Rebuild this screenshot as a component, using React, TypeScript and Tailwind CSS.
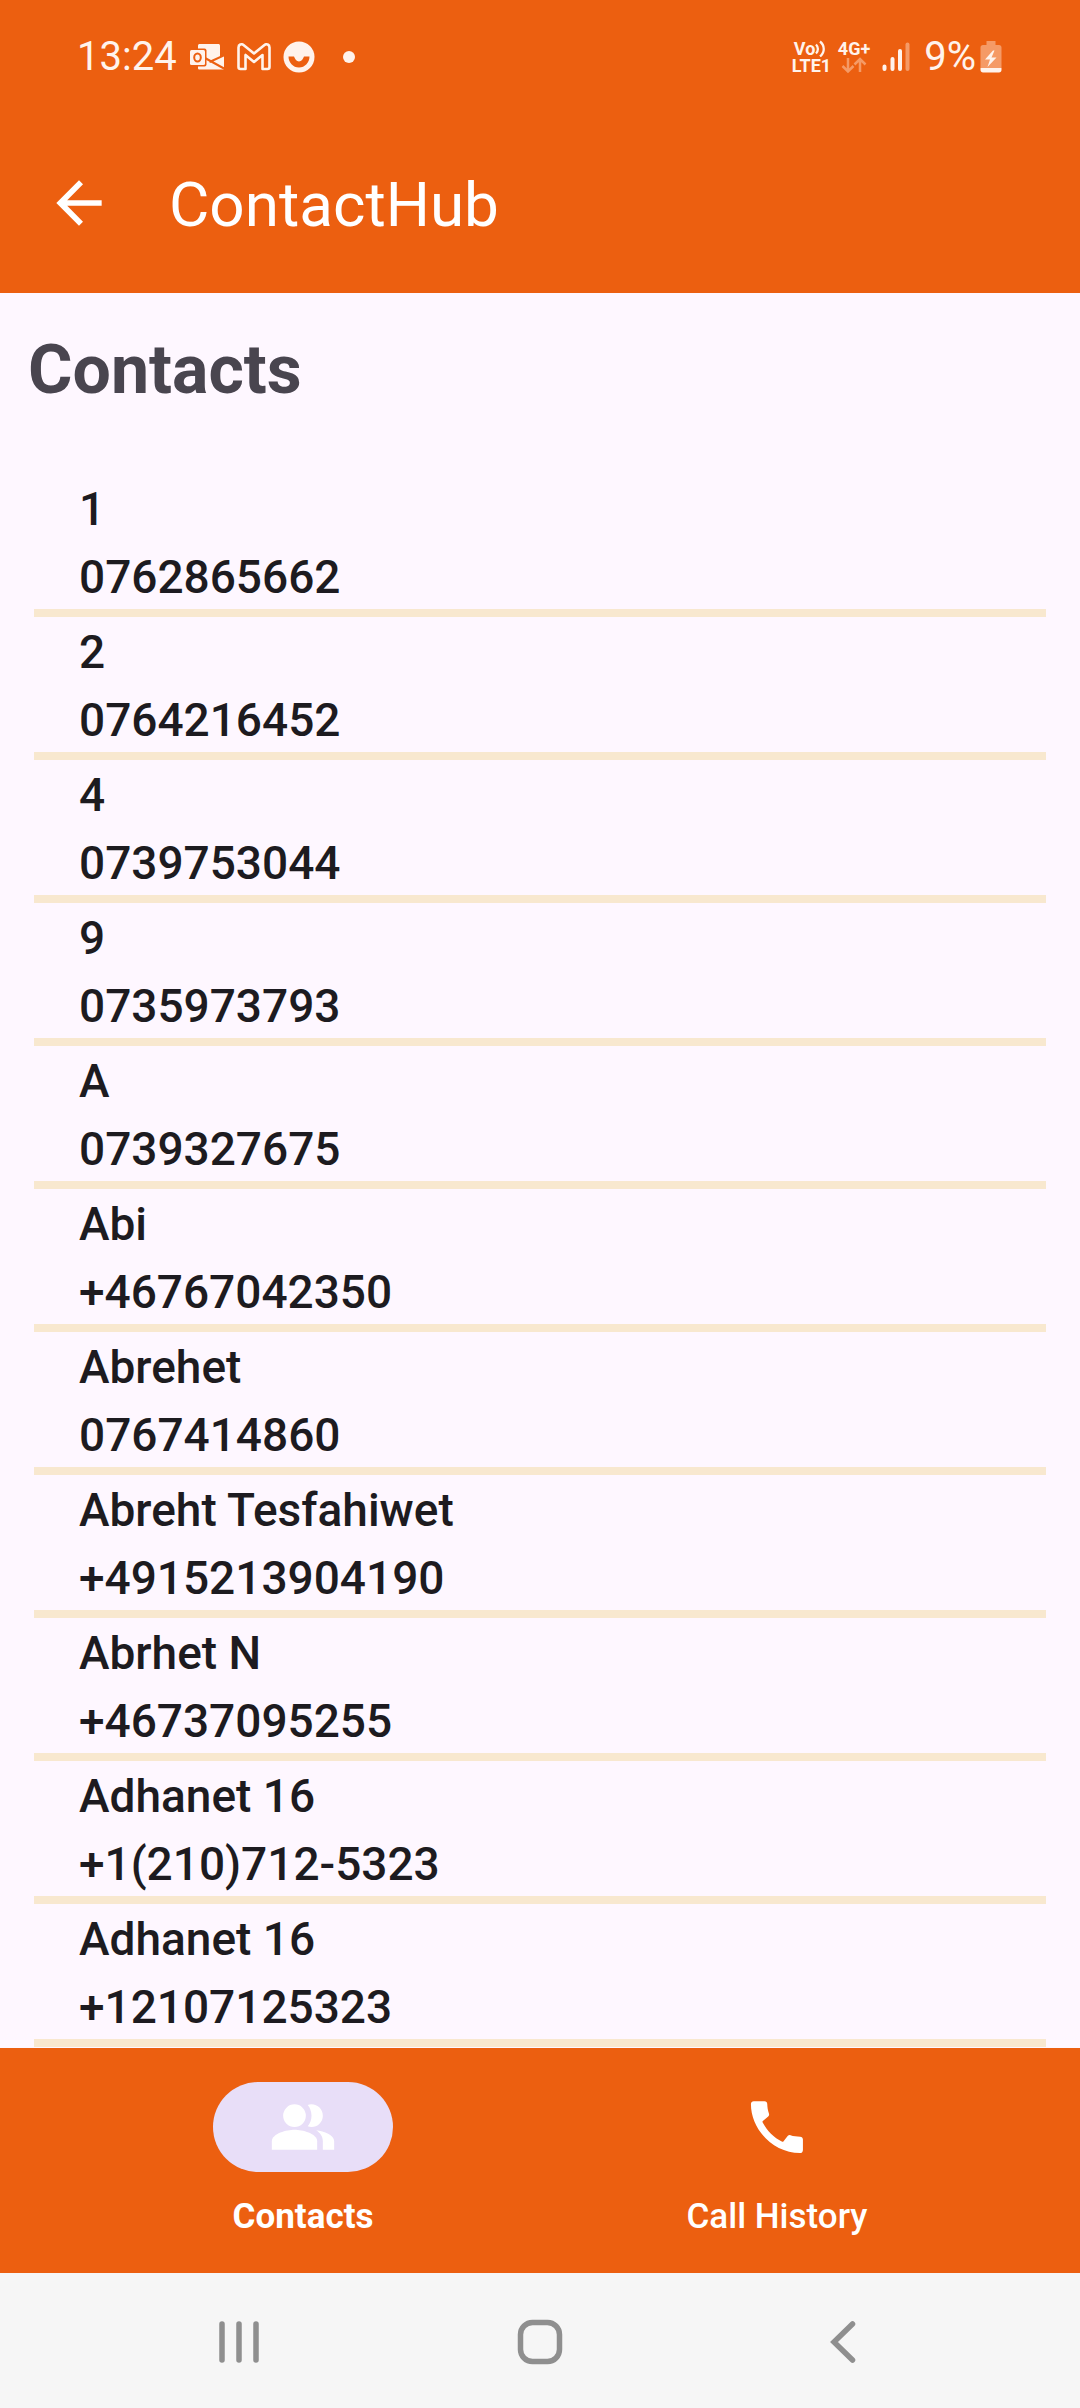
import React from "react";

type Contact = { name: string; phone: string };

const contacts: Contact[] = [
  { name: "1", phone: "0762865662" },
  { name: "2", phone: "0764216452" },
  { name: "4", phone: "0739753044" },
  { name: "9", phone: "0735973793" },
  { name: "A", phone: "0739327675" },
  { name: "Abi", phone: "+46767042350" },
  { name: "Abrehet", phone: "0767414860" },
  { name: "Abreht Tesfahiwet", phone: "+4915213904190" },
  { name: "Abrhet N", phone: "+46737095255" },
  { name: "Adhanet 16", phone: "+1(210)712-5323" },
  { name: "Adhanet 16", phone: "+12107125323" },
];

function OutlookIcon() {
  return (
    <svg width="36" height="28" viewBox="0 0 36 28" aria-hidden="true">
      <path d="M9 3c0-1.500.5-2 2-2h18c1.500 0 2 .5 2 2v11l4-1.500V25c0 1-.5 1.500-1.500 1.500H11c-1.500 0-2-.5-2-1.500z" fill="#fff3ec" />
      <path d="M31 1v12l4 0V1z" fill="#ec5f10" />
      <path d="M16 15l19 10.500M36 12L20.500 19" stroke="#ec5f10" strokeWidth="2" fill="none" />
      <rect x="-1" y="5.500" width="18.500" height="18" rx="2" fill="#ec5f10" />
      <rect x="1" y="7" width="15" height="15" rx="1.500" fill="#fff3ec" />
      <ellipse cx="8.500" cy="14.500" rx="3.300" ry="4" fill="none" stroke="#ec5f10" strokeWidth="2" />
    </svg>
  );
}

function GmailIcon() {
  return (
    <svg width="34" height="28" viewBox="0 0 34 28" aria-hidden="true">
      <path
        d="M1.500 4.500c0-3 3-4 5-2.500L17 10.500 27.500 2c2-1.500 5-.5 5 2.500V24c0 1.500-.5 2-2 2H25.500V12L17 19 8.500 12V26H3.500c-1.500 0-2-.5-2-2z"
        fill="none"
        stroke="#fff3ec"
        strokeWidth="2.600"
        strokeLinejoin="round"
      />
    </svg>
  );
}

function SmileIcon() {
  return (
    <svg width="32" height="32" viewBox="0 0 32 32" aria-hidden="true">
      <circle cx="16" cy="16" r="15.500" fill="#fff3ec" />
      <path
        d="M5.500 15.500H11C12 18 13.500 20.500 16 20.500S20 18 21 15.500H26.500C26.500 21.500 22 26.500 16 26.500S5.500 21.500 5.500 15.500z"
        fill="#ec5f10"
      />
    </svg>
  );
}

function VolteIcon() {
  return (
    <div className="flex w-10 flex-col text-[18px] leading-[17px] font-bold">
      <span className="flex items-center pl-0.5">
        Vo
        <svg width="12" height="17" viewBox="0 0 12 17" fill="none" stroke="#fff3ec" strokeWidth="2.300" aria-hidden="true">
          <path d="M1 4.500c2.500 2.500 2.500 6.500 0 9M5 1.500c5 4 5 11 0 15" />
        </svg>
      </span>
      <span>LTE1</span>
    </div>
  );
}

function NetworkIcon() {
  return (
    <div className="flex flex-col items-center text-[18px] leading-[17px] font-bold">
      <span>4G+</span>
      <svg width="26" height="17" viewBox="0 0 26 17" fill="none" stroke="#f59a66" strokeWidth="2.500" aria-hidden="true">
        <path d="M7 1v13M1.500 9L7 14.500 12.500 9M19 15V2M13.500 7.500L19 2l5.500 5.500" />
      </svg>
    </div>
  );
}

function SignalIcon() {
  return (
    <svg width="28" height="30" viewBox="0 0 28 30" strokeWidth="4" strokeLinecap="round" stroke="#fff3ec" aria-hidden="true">
      <path d="M2.500 24.500v2.500M10.500 17v10M18 9v18" />
      <path d="M25.500 2.500V27" stroke="#f59a66" />
    </svg>
  );
}

function BatteryIcon() {
  return (
    <svg width="22" height="32" viewBox="0 0 22 32" aria-hidden="true">
      <path d="M6.500 0h9v4H19c1.500 0 2.500 1 2.500 2.500V27H.5V6.500C.5 5 1.500 4 3 4h3.500z" fill="#f59a66" />
      <path d="M.5 27h21v2c0 1.500-1 2.500-2.500 2.500H3C1.500 31.500.5 30.500.5 29z" fill="#fff3ec" />
      <path d="M13 9.500L5 18.500h5L7.500 26l9-9.500h-5l3-7z" fill="#fff3ec" />
    </svg>
  );
}

function StatusBar() {
  return (
    <div className="flex h-[113px] items-center justify-between pr-[78px] pl-[77px] text-[40px] leading-12 text-[#fff3ec]">
      <div className="flex items-center">
        <span>13:24</span>
        <span className="ml-3 flex items-center gap-3">
          <OutlookIcon />
          <GmailIcon />
          <SmileIcon />
        </span>
        <span className="ml-7 size-3 rounded-full bg-[#fff3ec]" />
      </div>
      <div className="flex items-center">
        <VolteIcon />
        <span className="ml-1.5">
          <NetworkIcon />
        </span>
        <span className="ml-3">
          <SignalIcon />
        </span>
        <span className="mr-1 ml-3.5">9%</span>
        <BatteryIcon />
      </div>
    </div>
  );
}

function AppBar() {
  return (
    <header className="flex h-[180px] items-center pl-[45px] text-white">
      <button type="button" aria-label="Back" className="size-[68px]">
        <svg viewBox="0 0 24 24" fill="currentColor" className="size-full" aria-hidden="true">
          <path d="M20 11H7.830l5.590-5.590L12 4l-8 8 8 8 1.410-1.410L7.830 13H20v-2z" />
        </svg>
      </button>
      <h1 className="ml-14 pt-1 text-[62px] leading-[72px]">ContactHub</h1>
    </header>
  );
}

function ContactList() {
  return (
    <ul className="mt-16 px-[34px]">
      {contacts.map((c) => (
        <li
          key={c.phone}
          className="border-b-8 border-[#f8e8cf] pt-px pl-[45px] text-[46px] leading-[68px] font-medium text-[#1d1b20]"
        >
          <p>{c.name}</p>
          <p className="-mb-0.5">{c.phone}</p>
        </li>
      ))}
    </ul>
  );
}

function BottomTabs() {
  return (
    <nav className="flex h-[225px] bg-[#ec5f10] px-[66px] pt-[34px] text-[35px] leading-[45px] text-white">
      <button type="button" aria-current="page" className="flex flex-1 flex-col items-center gap-[22px] font-bold">
        <span className="flex h-[90px] w-[180px] items-center justify-center rounded-full bg-[#e8def8]">
          <svg viewBox="0 0 24 24" fill="currentColor" className="size-[68px]" aria-hidden="true">
            <path d="M16.670 13.130C18.040 14.060 19 15.320 19 17v3h4v-3c0-2.180-3.570-3.470-6.330-3.870z" />
            <circle cx="9" cy="8" r="4" />
            <path d="M15 12c2.210 0 4-1.790 4-4s-1.790-4-4-4c-.470 0-.910.100-1.330.240C14.500 5.270 15 6.580 15 8s-.500 2.730-1.330 3.760c.420.140.860.240 1.330.240z" />
            <path d="M9 13c-2.670 0-8 1.340-8 4v3h16v-3c0-2.660-5.330-4-8-4z" />
          </svg>
        </span>
        Contacts
      </button>
      <button type="button" className="flex flex-1 flex-col items-center gap-[22px] font-medium">
        <span className="flex h-[90px] w-[180px] items-center justify-center">
          <svg viewBox="0 0 24 24" fill="currentColor" className="size-[68px]" aria-hidden="true">
            <path d="M3.800 2.900H7.600c.6 0 .9.300.95.900.05 1.300.2 2.300.6 3.400.15.450.1.800-.25 1.100L7 9.900c-.15.150-.15.300-.05.500 1.600 3 3.900 5.300 6.900 6.800.15.050.3 0 .4-.1l1.500-1.900c.3-.3.600-.4 1-.3 1.100.35 2.200.5 3.400.5.6 0 1 .4 1 1v3.700c0 .7-.4 1.100-1 1.100C10.900 21.200 2.800 13.100 2.800 3.900c0-.6.4-1 1-1z" />
          </svg>
        </span>
        Call History
      </button>
    </nav>
  );
}

function SystemNav() {
  return (
    <div className="flex h-[135px] bg-[#f6f6f6] px-[88px] pt-0.5 text-[#8f8f8f]">
      <button type="button" aria-label="Recent apps" className="flex flex-1 items-center justify-center">
        <svg width="48" height="48" viewBox="0 0 48 48" fill="none" stroke="currentColor" strokeWidth="5.500" strokeLinecap="round">
          <path d="M7 6v36M24 6v36M41 6v36" />
        </svg>
      </button>
      <button type="button" aria-label="Home" className="flex flex-1 items-center justify-center">
        <svg width="48" height="48" viewBox="0 0 48 48" fill="none" stroke="currentColor" strokeWidth="5.500">
          <rect x="4.500" y="4.500" width="39" height="39" rx="12" />
        </svg>
      </button>
      <button type="button" aria-label="Back" className="flex flex-1 items-center justify-center">
        <svg width="48" height="48" viewBox="0 0 48 48" fill="none" stroke="currentColor" strokeWidth="5.500" strokeLinecap="round">
          <path d="M35.500 6L17 24l18.500 18" />
        </svg>
      </button>
    </div>
  );
}

export default function App() {
  return (
    <div className="flex min-h-screen flex-col bg-[#fef7ff] font-[Roboto,sans-serif]">
      <div className="bg-[#ec5f10]">
        <StatusBar />
        <AppBar />
      </div>
      <main className="flex-1">
        <h2 className="mt-[37px] pl-7 text-[68px] leading-[80px] font-bold text-[#49454f]">Contacts</h2>
        <ContactList />
      </main>
      <BottomTabs />
      <SystemNav />
    </div>
  );
}
